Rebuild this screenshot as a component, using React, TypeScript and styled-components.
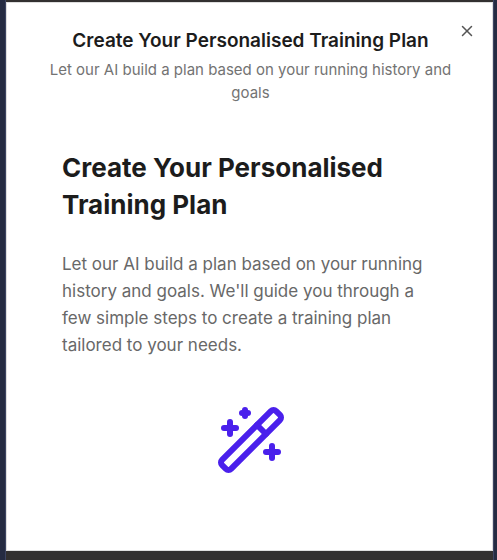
import React from "react";
import styled, { createGlobalStyle } from "styled-components";
import { WandSparkles, X } from "lucide-react";

const GlobalStyle = createGlobalStyle`
  *, *::before, *::after { box-sizing: border-box; }
  body {
    margin: 0;
    background: #252b42;
    font-family: Inter, "Liberation Sans", sans-serif;
  }
`;

const Backdrop = styled.div`
  display: flex;
  flex-direction: column;
  min-height: 100vh;
  margin: 0 3px 0 5px;
  padding: 2px 0 9px;
  background: #323030;
  border: solid #3d4462;
  border-width: 0 1px;
`;

const Dialog = styled.section`
  position: relative;
  flex: 1;
  padding: 26px 23px 24px 25px;
  background: #fff;
  border: 1px solid #dedede;
`;

const Header = styled.header`
  text-align: center;
`;

const DialogTitle = styled.h1`
  margin: 0;
  color: #1c1c1c;
  font-size: 19px;
  font-weight: 600;
  line-height: 24px;
`;

const DialogDescription = styled.p`
  margin: 5px 0 0;
  color: #737373;
  font-size: 15px;
  line-height: 23px;
`;

const CloseButton = styled.button`
  position: absolute;
  top: 19px;
  right: 16px;
  display: flex;
  padding: 0;
  color: #555;
  background: none;
  border: 0;
  cursor: pointer;
`;

const Step = styled.div`
  padding: 45px 30px 0;
`;

const StepTitle = styled.h2`
  margin: 0;
  color: #1c1c1c;
  font-size: 26px;
  font-weight: 700;
  line-height: 37px;
`;

const StepText = styled.p`
  margin: 28px 0 0;
  color: #686868;
  font-size: 17px;
  line-height: 27px;
`;

const Illustration = styled.div`
  display: flex;
  justify-content: center;
  margin-top: 45px;
  color: #4a20ec;
`;

export default function App() {
  return (
    <>
      <GlobalStyle />
      <Backdrop>
        <Dialog role="dialog" aria-labelledby="dialog-title" aria-describedby="dialog-description">
          <Header>
            <DialogTitle id="dialog-title">Create Your Personalised Training Plan</DialogTitle>
            <DialogDescription id="dialog-description">
              Let our AI build a plan based on your running history and goals
            </DialogDescription>
          </Header>
          <CloseButton type="button" aria-label="Close">
            <X size={18} strokeWidth={2} />
          </CloseButton>
          <Step>
            <StepTitle>Create Your Personalised Training Plan</StepTitle>
            <StepText>
              Let our AI build a plan based on your running history and goals. We'll guide you
              through a few simple steps to create a training plan tailored to your needs.
            </StepText>
            <Illustration>
              <WandSparkles size={72} strokeWidth={2} aria-hidden="true" />
            </Illustration>
          </Step>
        </Dialog>
      </Backdrop>
    </>
  );
}
